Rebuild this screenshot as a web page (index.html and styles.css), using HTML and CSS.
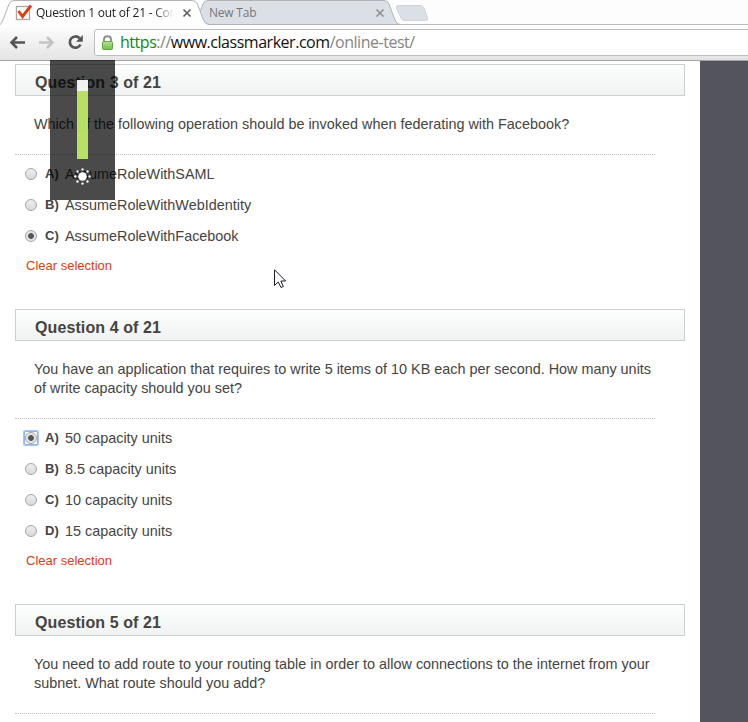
FILE: index.html
```html
<!DOCTYPE html>
<html lang="en">
<head>
<meta charset="utf-8">
<title>Question 1 out of 21</title>
<link rel="stylesheet" href="styles.css">
</head>
<body>
<header class="browser">
  <svg class="chrome-art" width="748" height="61" viewBox="0 0 748 61" aria-hidden="true">
    <defs>
      <linearGradient id="bar" x1="0" y1="0" x2="0" y2="1"><stop offset="0" stop-color="#fff"/><stop offset="1" stop-color="#e3e3e3"/></linearGradient>
      <linearGradient id="lock" x1="0" y1="0" x2="0" y2="1"><stop offset="0" stop-color="#b4e38f"/><stop offset="1" stop-color="#6cc044"/></linearGradient>
    </defs>
    <rect y="24" width="748" height="37" fill="url(#bar)"/>
    <path d="M0 24.5H748" stroke="#b9babb"/>
    <path d="M195 24.5L203 4Q204.500 .5 208 .5H384Q387.500 .5 389 4L395 20Q396.500 24.500 400 24.500Z" fill="#dbe0e7" stroke="#b0b2b5"/>
    <path d="M0 25V24.500Q1.500 24 3 20L9 4Q10.500 .5 14 .5H192Q196 .5 197.500 4L203 19Q205 24.500 209 24.500V26H0Z" fill="#fefefe"/>
    <path d="M0 24.500Q1.500 24 3 20L9 4Q10.500 .5 14 .5H192Q196 .5 197.500 4L203 19Q205 24.500 209 24.500" fill="none" stroke="#b0b2b5"/>
    <path d="M399 5.500H420Q423 5.500 424 8L427.500 18Q428.500 20.500 425.500 20.500H405Q402 20.500 401 18L396.500 8Q396 5.500 399 5.500Z" fill="#dbe0e7" stroke="#cfd2d6"/>
    <rect x="16.500" y="6.500" width="13" height="13" fill="#fff" stroke="#a9a9a9" stroke-width="1.300"/>
    <path d="M18.500 11L22.500 16.500L31 5.500" fill="none" stroke="#e23c10" stroke-width="2.900"/>
    <path d="M183.500 9.500L190.500 16.500M190.500 9.500L183.500 16.500" stroke="#606060" stroke-width="1.700"/>
    <path d="M376.500 9.500L383.500 16.500M383.500 9.500L376.500 16.500" stroke="#8b8d90" stroke-width="1.500"/>
    <path d="M25 42.500H12M17 37L11.500 42.500L17 48" fill="none" stroke="#555" stroke-width="2.600"/>
    <path d="M39 42.500H52M47 37L52.500 42.500L47 48" fill="none" stroke="#c4c4c4" stroke-width="2.600"/>
    <path d="M79.500 38.200A5.600 5.600 0 1 0 80.500 44.500" fill="none" stroke="#555" stroke-width="2.700"/>
    <path d="M82.800 35V41.800H76Z" fill="#555"/>
    <path d="M748 29.500H97Q94.500 29.500 94.500 32V53Q94.500 55.500 97 55.500H748" fill="#fff" stroke="#bdbdbd"/>
    <path d="M104 42V39.500Q104 36.200 107.500 36.200T111 39.500V42" fill="none" stroke="#909090" stroke-width="2"/>
    <rect x="102.500" y="41.500" width="10" height="8" rx="1" fill="url(#lock)" stroke="#63a845"/>
    <path d="M0 60.500H748" stroke="#a3a3a3"/>
  </svg>
  <div class="tabs">
    <span class="tab-title active">Question 1 out of 21 - Cor</span>
    <span class="tab-title">New Tab</span>
  </div>
  <div class="address"><span class="secure">https</span><span class="dim">://</span>www.classmarker.com<span class="dim">/online-test/</span></div>
</header>
<main class="page">
  <section class="question">
    <h2>Question 3 of 21</h2>
    <p class="prompt">Which of the following operation should be invoked when federating with Facebook?</p>
    <ul>
      <li><i class="radio"></i><b>A)</b><span>AssumeRoleWithSAML</span></li>
      <li><i class="radio"></i><b>B)</b><span>AssumeRoleWithWebIdentity</span></li>
      <li><i class="radio on"></i><b>C)</b><span>AssumeRoleWithFacebook</span></li>
    </ul>
    <a class="clear">Clear selection</a>
  </section>
  <section class="question">
    <h2>Question 4 of 21</h2>
    <p class="prompt">You have an application that requires to write 5 items of 10 KB each per second. How many units<br>of write capacity should you set?</p>
    <ul>
      <li><i class="radio on focus"></i><b>A)</b><span>50 capacity units</span></li>
      <li><i class="radio"></i><b>B)</b><span>8.5 capacity units</span></li>
      <li><i class="radio"></i><b>C)</b><span>10 capacity units</span></li>
      <li><i class="radio"></i><b>D)</b><span>15 capacity units</span></li>
    </ul>
    <a class="clear">Clear selection</a>
  </section>
  <section class="question">
    <h2>Question 5 of 21</h2>
    <p class="prompt">You need to add route to your routing table in order to allow connections to the internet from your<br>subnet. What route should you add?</p>
    <ul></ul>
  </section>
</main>
<div class="brightness">
  <div class="level"></div>
  <svg width="17" height="17" viewBox="0 0 16 16"><circle cx="8" cy="8" r="4" fill="#fff"/><g fill="#fff"><circle cx="8" cy="1.300" r="1.100"/><circle cx="8" cy="14.700" r="1.100"/><circle cx="1.300" cy="8" r="1.100"/><circle cx="14.700" cy="8" r="1.100"/><circle cx="3.300" cy="3.300" r="1.100"/><circle cx="12.700" cy="3.300" r="1.100"/><circle cx="3.300" cy="12.700" r="1.100"/><circle cx="12.700" cy="12.700" r="1.100"/></g></svg>
</div>
<svg class="cursor" width="13" height="20" viewBox="0 0 13 20"><path d="M.5 .8V16.500L4.200 13L7 18.500L9.300 17.500L6.900 12H11.700Z" fill="#fff" stroke="#1b1b28"/></svg>
</body>
</html>
```
FILE: styles.css
```css
* { box-sizing: border-box; }
body {
  margin: 0;
  width: 748px;
  height: 722px;
  overflow: hidden;
  position: relative;
  background: #54545e;
  color: #444;
  font-family: "Liberation Sans", Arial, sans-serif;
}
.browser {
  position: relative;
  height: 61px;
  background: #fdfdfd;
  font-family: "Open Sans", "Noto Sans", sans-serif;
}
.chrome-art { position: absolute; left: 0; top: 0; }
.tabs {
  position: relative;
  display: flex;
  gap: 34px;
  height: 25px;
  padding-left: 36px;
  font-size: 12px;
  line-height: 25px;
  letter-spacing: -0.22px;
  white-space: nowrap;
  color: #777;
}
.tab-title.active {
  width: 139px;
  color: #222;
  -webkit-mask-image: linear-gradient(90deg, #000 118px, transparent 138px);
  mask-image: linear-gradient(90deg, #000 118px, transparent 138px);
}
.address {
  position: relative;
  padding-left: 120px;
  font-size: 16px;
  line-height: 35px;
  letter-spacing: -0.47px;
  white-space: nowrap;
  color: #111;
}
.secure { color: #0b8a16; }
.dim { color: #858585; }
.page {
  width: 700px;
  height: 661px;
  overflow: hidden;
  padding: 3px 15px 0;
  background: #fff;
}
.question { margin-bottom: 29px; }
h2 {
  margin: 0;
  height: 32px;
  padding-left: 19px;
  border: 1px solid #cdd0d0;
  background: linear-gradient(#fdfefe, #f0f3f2);
  font-size: 16px;
  line-height: 35px;
  letter-spacing: 0.1px;
}
.prompt {
  margin: 0;
  padding: 19px 0 20px 19px;
  font-size: 14.4px;
  line-height: 19px;
  white-space: nowrap;
}
ul {
  list-style: none;
  width: 640px;
  margin: 0;
  padding: 3px 0 1px;
  border-top: 1px dotted #c4c4c4;
}
li {
  display: flex;
  align-items: center;
  height: 31px;
  padding-left: 10px;
  font-size: 14.4px;
}
li b { width: 20px; font-size: 13px; }
.radio {
  position: relative;
  flex: none;
  width: 12px;
  height: 12px;
  margin-right: 8px;
  border: 1px solid #a5a5a5;
  border-radius: 50%;
  background: linear-gradient(#eee, #d8d8d8);
}
.radio.on { background: radial-gradient(circle, #555 0 2.5px, #e5e5e5 3.3px); }
.radio.focus::after {
  content: "";
  position: absolute;
  inset: -2px;
  border: 1px solid #8fb3f5;
  border-radius: 1px;
  box-shadow: 0 0 0 1px #a9c6f8;
}
.clear {
  display: block;
  margin-left: 11px;
  height: 28px;
  font-size: 13px;
  line-height: 28px;
  color: #dd3b12;
}
.brightness {
  position: absolute;
  left: 50px;
  top: 60px;
  display: flex;
  flex-direction: column;
  align-items: center;
  width: 65px;
  height: 140px;
  padding-top: 20px;
  background: rgba(0, 0, 0, 0.71);
}
.level {
  width: 11px;
  height: 79px;
  margin-bottom: 9px;
  background: linear-gradient(#fff 0 11px, #c0ea68 11px);
  opacity: 0.93;
}
.cursor { position: absolute; left: 274px; top: 269px; }
```
